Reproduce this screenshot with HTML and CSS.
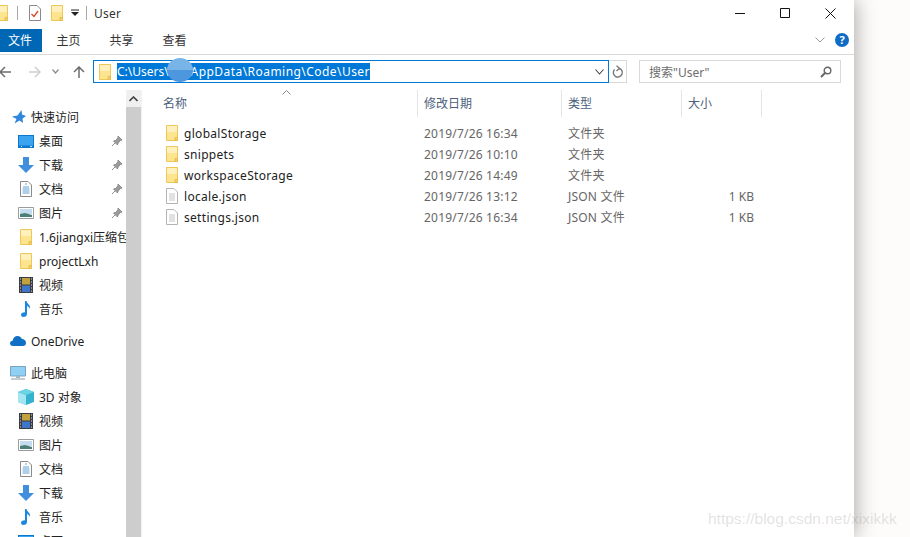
FILE: index.html
```html
<!DOCTYPE html>
<html lang="en">
<head>
  <meta charset="UTF-8">
  <title>User</title>
  <link rel="stylesheet" href="styles.css">
</head>
<body>

<svg class="defs" width="0" height="0">
  <symbol id="folder" viewBox="0 0 12 16">
    <path d="M.5.5h11v15H.5z" fill="#fde48f" stroke="#eec759"/>
    <path d="M1 1h10v6H1z" fill="#fff0bd"/>
    <path d="M9 12.500h2.500v3H9z" fill="#f6d365" stroke="#e8bd4c"/>
  </symbol>
  <symbol id="file" viewBox="0 0 12 16">
    <path d="M.5.5h7.500l3.500 3.500v11.500H.5z" fill="#fff" stroke="#b4b4b4"/>
    <path d="M3 6h6M3 8h6M3 10h6M3 12h6" stroke="#c4c4c4"/>
  </symbol>
  <symbol id="pin" viewBox="0 0 12 12">
    <path d="M7 1l4 4-1.500.5-2.500 2.500-.5 2-4-4 2-.5 2.500-2.500zM4 8l-3 3" fill="#9a9a9a" stroke="#8c8c8c"/>
  </symbol>
  <symbol id="desktop" viewBox="0 0 16 13">
    <path d="M0 0h16v13H0z" fill="#0b78cf"/>
    <path d="M1 1h14v9.500H1z" fill="#3aa4ee"/>
    <path d="M3 11.500h1M12 11.500h2" stroke="#cde8fb"/>
  </symbol>
  <symbol id="down" viewBox="0 0 16 16">
    <path d="M5 0h6v8h5l-8 8-8-8h5z" fill="#3f8fdc"/>
  </symbol>
  <symbol id="doc" viewBox="0 0 12 16">
    <path d="M.5.500h7.500l3.500 3.500v11.500H.5z" fill="#fff" stroke="#8a8a8a"/>
    <path d="M5 3h2M3 6h6M2.500 8h7M2.500 10h7M2.500 12h7" stroke="#5c9fd2"/>
  </symbol>
  <symbol id="pic" viewBox="0 0 16 12">
    <path d="M.5.500h15v11H.5z" fill="#fff" stroke="#9c9c9c"/>
    <path d="M2 2h12v5H2z" fill="#c3dcef"/>
    <path d="M2 7l5-1 7 2v2H2z" fill="#4c7f78"/>
  </symbol>
  <symbol id="video" viewBox="0 0 14 16">
    <path d="M0 0h14v16H0z" fill="#3b3b44"/>
    <path d="M3 1h8v6.500H3z" fill="#c0a33e"/>
    <path d="M3 8.500h8V15H3z" fill="#3f76c9"/>
    <path d="M1 2h1M1 5h1M1 8h1M1 11h1M1 14h1M12 2h1M12 5h1M12 8h1M12 11h1M12 14h1" stroke="#dcdcdc"/>
  </symbol>
  <symbol id="music" viewBox="0 0 12 16">
    <path d="M5 0h1.500c.5 3 4.500 4 3.500 8-.5-1.500-1.500-2.500-3-3v8c0 2-1.500 3-3.500 3S1 15 1 13.500 3 11 5 11.200z" fill="#1c87dc"/>
  </symbol>
  <symbol id="star" viewBox="0 0 14 14">
    <path d="M9.500 0l.5 4.500 4 1.500-3.500 2.500.5 4.500-3.500-2.500L2.500 13.500l2-4.500L0 6.500l5.500-1z" fill="#2f87dd"/>
  </symbol>
  <symbol id="cloud" viewBox="0 0 16 10">
    <path d="M3 10C1 10 0 8.800 0 7.300 0 5.800 1.200 4.800 2.600 4.700 3.200 2 5 0 7.500 0c2 0 3.500 1 4.200 2.800C14 3 16 4.500 16 7c0 2-1.300 3-3 3z" fill="#0f70c4"/>
  </symbol>
  <symbol id="pc" viewBox="0 0 16 14">
    <path d="M.5.500h15v9.500H.5z" fill="#8fd0f5" stroke="#7ba3bd"/>
    <path d="M6 10h4v2H6z" fill="#a8b8c2"/>
    <path d="M1 13h14" stroke="#8e9ba4"/>
  </symbol>
  <symbol id="cube" viewBox="0 0 16 16">
    <path d="M8 0l8 3v10l-8 3-8-3V3z" fill="#34b2d0"/>
    <path d="M0 3l8 3v10l-8-3z" fill="#a3e6ef"/>
    <path d="M0 3l8-3 8 3-8 3z" fill="#6bd3e4"/>
  </symbol>
</svg>

<div class="window">
  <div class="titlebar">
    <svg class="qa-folder-cut" width="12" height="16"><use href="#folder"/></svg>
    <span class="qa-sep"></span>
    <svg class="qa-check" width="12" height="16" viewBox="0 0 12 16">
      <path d="M.5.500h7.500l3.500 3.500v11.500H.5z" fill="#fff" stroke="#8a8a8a"/>
      <path d="M2.500 9l2.500 2.500 4-5.500" fill="none" stroke="#d8492c" stroke-width="1.300"/>
    </svg>
    <svg class="qa-folder" width="12" height="16"><use href="#folder"/></svg>
    <svg class="qa-drop" width="8" height="8" viewBox="0 0 8 8">
      <path d="M0 1h8" stroke="#222"/>
      <path d="M0 3h8L4 7z" fill="#222"/>
    </svg>
    <span class="qa-sep"></span>
    <span class="title">User</span>
    <div class="winbtns">
      <svg width="10" height="10" viewBox="0 0 10 10"><path d="M0 5.500h10" stroke="#111"/></svg>
      <svg width="10" height="10" viewBox="0 0 10 10"><path d="M.5.500h9v9h-9z" fill="none" stroke="#111"/></svg>
      <svg width="11" height="11" viewBox="0 0 11 11"><path d="M.5.500l10 10M10.500.500l-10 10" stroke="#111"/></svg>
    </div>
  </div>

  <div class="ribbon">
    <span class="tab tab-file">文件</span>
    <span class="tab">主页</span>
    <span class="tab">共享</span>
    <span class="tab">查看</span>
    <svg class="ribbon-chev" width="10" height="6" viewBox="0 0 10 6"><path d="M.5.500L5 5 9.500.500" fill="none" stroke="#9a9a9a"/></svg>
    <span class="help">?</span>
  </div>

  <div class="addr-row">
    <div class="nav">
      <svg width="12" height="12" viewBox="0 0 12 12"><path d="M12 6H1.500M6 1L1 6l5 5" fill="none" stroke="#6d6d6d" stroke-width="1.500"/></svg>
      <svg class="nav-fwd" width="12" height="12" viewBox="0 0 12 12"><path d="M0 6h10.500M6 1l5 5-5 5" fill="none" stroke="#cfcfcf" stroke-width="1.500"/></svg>
      <svg class="nav-down" width="7" height="5" viewBox="0 0 7 5"><path d="M.5.500L3.500 4 6.500.500" fill="none" stroke="#8a8a8a" stroke-width="1.200"/></svg>
      <svg class="nav-up" width="12" height="12" viewBox="0 0 12 12"><path d="M6 12V1.500M1 6l5-5 5 5" fill="none" stroke="#6d6d6d" stroke-width="1.500"/></svg>
    </div>
    <div class="addr">
      <svg class="addr-folder" width="12" height="16"><use href="#folder"/></svg>
      <div class="addr-text"><span>C:\Users\</span><span>AppData\Roaming\Code\User</span></div>
      <svg class="addr-chev" width="9" height="6" viewBox="0 0 9 6"><path d="M.5.500L4.500 5 8.500.500" fill="none" stroke="#444" stroke-width="1.100"/></svg>
    </div>
    <div class="refresh">
      <svg width="12" height="14" viewBox="0 0 12 14"><path d="M7 3.200a4.500 4.500 0 1 1-4.500 1.300M7.500 3.200L4.500 .8M7.500 3.200L4.500 6" fill="none" stroke="#7a7a7a" stroke-width="1.400"/></svg>
    </div>
    <div class="search">
      <span>搜索"User"</span>
      <svg width="12" height="12" viewBox="0 0 12 12"><circle cx="7.500" cy="4.500" r="3.300" fill="none" stroke="#666" stroke-width="1.400"/><path d="M5 7l-4 4" stroke="#666" stroke-width="2"/></svg>
    </div>
  </div>

  <div class="main">
    <nav class="side">
      <div class="item top"><svg class="ico ico-star" width="14" height="14"><use href="#star"/></svg>快速访问</div>
      <div class="item sub"><svg class="ico" width="16" height="13"><use href="#desktop"/></svg>桌面<svg class="pin" width="12" height="12"><use href="#pin"/></svg></div>
      <div class="item sub"><svg class="ico" width="16" height="16"><use href="#down"/></svg>下载<svg class="pin" width="12" height="12"><use href="#pin"/></svg></div>
      <div class="item sub"><svg class="ico" width="16" height="16"><use href="#doc"/></svg>文档<svg class="pin" width="12" height="12"><use href="#pin"/></svg></div>
      <div class="item sub"><svg class="ico" width="16" height="12"><use href="#pic"/></svg>图片<svg class="pin" width="12" height="12"><use href="#pin"/></svg></div>
      <div class="item sub"><svg class="ico" width="16" height="16"><use href="#folder"/></svg>1.6jiangxi压缩包</div>
      <div class="item sub"><svg class="ico" width="16" height="16"><use href="#folder"/></svg>projectLxh</div>
      <div class="item sub"><svg class="ico" width="16" height="16"><use href="#video"/></svg>视频</div>
      <div class="item sub"><svg class="ico" width="16" height="16"><use href="#music"/></svg>音乐</div>
      <div class="item top gap"><svg class="ico" width="16" height="10"><use href="#cloud"/></svg>OneDrive</div>
      <div class="item top gap"><svg class="ico" width="16" height="14"><use href="#pc"/></svg>此电脑</div>
      <div class="item sub"><svg class="ico" width="16" height="16"><use href="#cube"/></svg>3D 对象</div>
      <div class="item sub"><svg class="ico" width="16" height="16"><use href="#video"/></svg>视频</div>
      <div class="item sub"><svg class="ico" width="16" height="12"><use href="#pic"/></svg>图片</div>
      <div class="item sub"><svg class="ico" width="16" height="16"><use href="#doc"/></svg>文档</div>
      <div class="item sub"><svg class="ico" width="16" height="16"><use href="#down"/></svg>下载</div>
      <div class="item sub"><svg class="ico" width="16" height="16"><use href="#music"/></svg>音乐</div>
      <div class="item sub"><svg class="ico" width="16" height="13"><use href="#desktop"/></svg>桌面</div>
    </nav>

    <div class="scrollbar">
      <div class="scroll-up"><svg width="9" height="6" viewBox="0 0 9 6"><path d="M.5 5L4.500 1 8.500 5" fill="none" stroke="#444" stroke-width="1.600"/></svg></div>
      <div class="scroll-thumb"></div>
    </div>

    <div class="list">
      <div class="head">
        <div class="col col-name">名称<svg class="sort" width="9" height="5" viewBox="0 0 9 5"><path d="M.5 4.500L4.500 .5 8.500 4.500" fill="none" stroke="#888"/></svg></div>
        <div class="col">修改日期</div>
        <div class="col">类型</div>
        <div class="col">大小</div>
      </div>
      <div class="row"><div class="name"><svg width="12" height="16"><use href="#folder"/></svg>globalStorage</div><div>2019/7/26 16:34</div><div>文件夹</div><div></div></div>
      <div class="row"><div class="name"><svg width="12" height="16"><use href="#folder"/></svg>snippets</div><div>2019/7/26 10:10</div><div>文件夹</div><div></div></div>
      <div class="row"><div class="name"><svg width="12" height="16"><use href="#folder"/></svg>workspaceStorage</div><div>2019/7/26 14:49</div><div>文件夹</div><div></div></div>
      <div class="row"><div class="name"><svg width="12" height="16"><use href="#file"/></svg>locale.json</div><div>2019/7/26 13:12</div><div>JSON 文件</div><div class="size">1 KB</div></div>
      <div class="row"><div class="name"><svg width="12" height="16"><use href="#file"/></svg>settings.json</div><div>2019/7/26 16:34</div><div>JSON 文件</div><div class="size">1 KB</div></div>
    </div>
  </div>
</div>

<div class="blur-blob"></div>
<div class="watermark">https://blog.csdn.net/xixikkk</div>

</body>
</html>
```

FILE: styles.css
```css
html, body {
  margin: 0;
  height: 537px;
  overflow: hidden;
}
body {
  position: relative;
  background-color: #fdfcfa;
  font-family: "Noto Sans", "Noto Sans CJK SC", sans-serif;
  font-size: 12px;
  color: #1a1a1a;
}
.defs {
  display: block;
}
svg {
  display: block;
  flex: none;
}
.window {
  width: 854px;
  height: 537px;
  background-color: #fff;
  box-shadow: 1px 0 20px rgba(0, 0, 0, .35);
  overflow: hidden;
}

/* title bar */
.titlebar {
  display: flex;
  align-items: center;
  height: 26px;
}
.qa-folder-cut {
  margin-left: -4px;
}
.qa-sep {
  width: 1px;
  height: 14px;
  background-color: #a8a8a8;
  margin-left: 9px;
}
.qa-check {
  margin-left: 11px;
}
.qa-folder {
  margin-left: 10px;
}
.qa-drop {
  margin-left: 8px;
}
.titlebar .qa-drop + .qa-sep {
  margin-left: 7px;
}
.title {
  margin-left: 7px;
  color: #333;
  letter-spacing: .2px;
}
.winbtns {
  display: flex;
  align-items: center;
  gap: 35px;
  margin-left: auto;
  margin-right: 18px;
}

/* ribbon */
.ribbon {
  display: flex;
  align-items: center;
  height: 29px;
  box-sizing: border-box;
  border-bottom: 1px solid #dadada;
}
.tab {
  width: 53px;
  text-align: center;
  color: #333;
}
.tab-file {
  width: 42px;
  height: 23px;
  line-height: 23px;
  padding-right: 2px;
  box-sizing: border-box;
  background-color: #0067b4;
  color: #fff;
}
.ribbon-chev {
  margin-left: auto;
  margin-right: 10px;
}
.help {
  width: 14px;
  height: 14px;
  line-height: 14px;
  border-radius: 50%;
  margin-right: 5px;
  background-color: #0f6cc4;
  color: #fff;
  font-size: 11px;
  font-weight: 700;
  text-align: center;
}

/* address row */
.addr-row {
  display: flex;
  align-items: center;
  height: 35px;
  box-sizing: border-box;
  padding-bottom: 2px;
}
.nav {
  display: flex;
  align-items: center;
  width: 94px;
  margin-left: -1px;
}
.nav-fwd {
  margin-left: 18px;
}
.nav-down {
  margin-left: 11px;
}
.nav-up {
  margin-left: 14px;
}
.addr {
  display: flex;
  align-items: center;
  width: 516px;
  height: 23px;
  box-sizing: border-box;
  border: 1px solid #0078d7;
}
.addr-folder {
  margin-left: 5px;
}
.addr-text {
  display: flex;
  justify-content: space-between;
  width: 253px;
  margin-left: 6px;
  background-color: #0078d7;
  color: #fff;
  line-height: 17px;
  white-space: nowrap;
}
.addr-text span + span {
  letter-spacing: .45px;
}
.addr-chev {
  margin-left: auto;
  margin-right: 4px;
}
.refresh {
  display: flex;
  align-items: center;
  justify-content: center;
  width: 18px;
  height: 23px;
  box-sizing: border-box;
  border: 1px solid #d9d9d9;
  border-left: 0;
}
.search {
  display: flex;
  align-items: center;
  justify-content: space-between;
  width: 202px;
  height: 23px;
  margin-left: 12px;
  padding: 0 8px 0 9px;
  box-sizing: border-box;
  border: 1px solid #d9d9d9;
  color: #6d6d6d;
}

/* main area */
.main {
  display: flex;
  height: 447px;
}
.side {
  width: 126px;
  padding-top: 15px;
  overflow: hidden;
  flex: none;
}
.item {
  display: flex;
  align-items: center;
  position: relative;
  height: 24px;
  white-space: nowrap;
  color: #222;
}
.top .ico {
  margin-right: 5px;
}
.top .ico-star {
  margin-left: 2px;
}
.top {
  padding-left: 10px;
}
.sub {
  padding-left: 18px;
}
.sub .ico {
  margin-right: 5px;
}
.gap {
  margin-top: 8px;
}
.pin {
  position: absolute;
  left: 111px;
  top: 6px;
}
.scrollbar {
  width: 15px;
  flex: none;
  display: flex;
  flex-direction: column;
  background-color: #f0f0f0;
}
.scroll-up {
  display: flex;
  align-items: center;
  justify-content: center;
  height: 17px;
}
.scroll-thumb {
  flex: 1;
  background-color: #cdcdcd;
}
.list {
  flex: 1;
  padding-left: 15px;
  border-left: 1px solid #f2f2f2;
}
.head {
  display: grid;
  grid-template-columns: 261px 144px 120px 80px;
  height: 27px;
  margin-bottom: 5.500px;
}
.col {
  position: relative;
  padding-left: 6px;
  line-height: 27px;
  border-right: 1px solid #e5e5e5;
  color: #4c607a;
}
.sort {
  position: absolute;
  left: 125px;
  top: 0;
}
.row {
  display: grid;
  grid-template-columns: 261px 144px 120px 72px;
  align-items: center;
  height: 21px;
  color: #666;
}
.row > div:nth-child(2),
.row > div:nth-child(3) {
  padding-left: 6px;
  letter-spacing: .2px;
}
.name {
  display: flex;
  align-items: center;
  gap: 6px;
  padding-left: 9px;
  color: #222;
  letter-spacing: .3px;
}
.size {
  text-align: right;
}

/* over the window */
.blur-blob {
  position: absolute;
  left: 167px;
  top: 58px;
  width: 26px;
  height: 24px;
  border-radius: 50%;
  background: linear-gradient(#78b4e8 50%, #4c97de 50%);
  filter: blur(.5px);
}
.watermark {
  position: absolute;
  left: 708px;
  top: 510px;
  font-family: "Liberation Sans", sans-serif;
  font-size: 15.500px;
  color: rgba(120, 120, 120, .22);
  white-space: nowrap;
}
```
